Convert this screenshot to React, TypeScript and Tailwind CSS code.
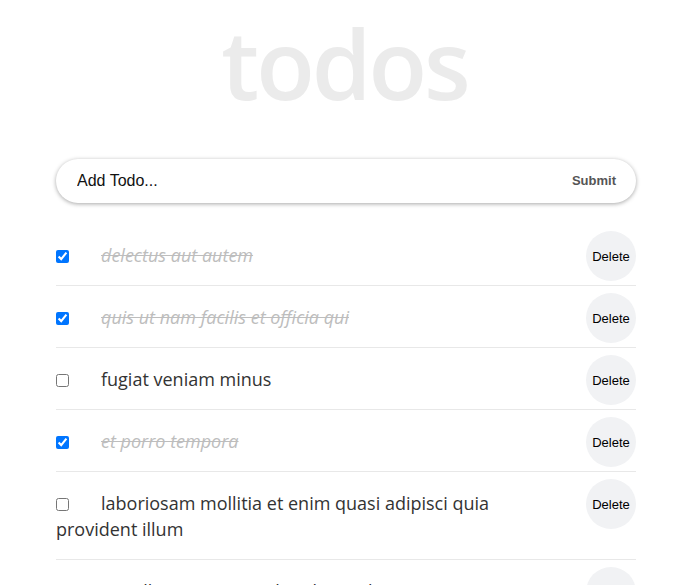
import { useState } from "react";

type Todo = { id: number; title: string; completed: boolean };

const initialTodos: Todo[] = [
    { id: 1, title: "delectus aut autem", completed: true },
    { id: 2, title: "quis ut nam facilis et officia qui", completed: true },
    { id: 3, title: "fugiat veniam minus", completed: false },
    { id: 4, title: "et porro tempora", completed: true },
    { id: 5, title: "laboriosam mollitia et enim quasi adipisci quia provident illum", completed: false },
    { id: 6, title: "qui ullam ratione quibusdam voluptatem quia omnis", completed: false },
    { id: 7, title: "illo expedita consequatur quia in", completed: false },
];

export default function App() {
    const [todos, setTodos] = useState<Todo[]>(initialTodos);
    const [text, setText] = useState("");

    const toggle = (id: number) => {
        setTodos(todos.map(t => (t.id === id ? { ...t, completed: !t.completed } : t)));
    };

    const remove = (id: number) => {
        setTodos(todos.filter(t => t.id !== id));
    };

    const submit = (e: React.FormEvent) => {
        e.preventDefault();
        if (!text.trim()) return;
        setTodos([...todos, { id: Date.now(), title: text, completed: false }]);
        setText("");
    };

    return (
        <div className="min-h-screen bg-white font-['Open_Sans',sans-serif]">
            <div className="w-[580px] ml-[56px]">
                {/* Title */}
                <h1 className="pr-[3px] text-center text-[96px] leading-[126px] tracking-[-3px] font-semibold text-[#ebebeb] select-none">
                    todos
                </h1>

                {/* Add form */}
                <form
                    onSubmit={submit}
                    className="mt-[33px] h-[44px] flex items-center rounded-full bg-white shadow-[0_1px_4px_rgba(0,0,0,0.35)]"
                >
                    <input
                        value={text}
                        onChange={e => setText(e.target.value)}
                        placeholder="Add Todo..."
                        className="flex-1 h-full pl-[21px] bg-transparent outline-none text-[16px] font-['Liberation_Sans',Arial,sans-serif] text-black placeholder:text-[#111]"
                    />
                    <button
                        type="submit"
                        className="pr-[20px] pl-3 h-full text-[13px] font-bold text-[#555] font-['Liberation_Sans',Arial,sans-serif]"
                    >
                        Submit
                    </button>
                </form>

                {/* List */}
                <ul className="mt-[21px]">
                    {todos.map(todo => (
                        <li
                            key={todo.id}
                            className="flex items-start justify-between pt-[7px] pb-[4px] border-b border-[#e8e8e8]"
                        >
                            <label className="flex-1 pt-[11px] pb-[13px] pr-[60px] text-[18px] leading-[26px] text-[#333]">
                                <input
                                    type="checkbox"
                                    checked={todo.completed}
                                    onChange={() => toggle(todo.id)}
                                    className="w-[13px] h-[13px] align-[-1px]"
                                />
                                <span
                                    className={
                                        todo.completed
                                            ? "ml-8 italic line-through text-[#bdbdbd]"
                                            : "ml-8"
                                    }
                                >
                                    {todo.title}
                                </span>
                            </label>
                            <button
                                onClick={() => remove(todo.id)}
                                className="w-[50px] h-[50px] shrink-0 pt-[2px] rounded-full bg-[#f1f2f4] text-[13px] text-black font-['Liberation_Sans',Arial,sans-serif]"
                            >
                                Delete
                            </button>
                        </li>
                    ))}
                </ul>
            </div>
        </div>
    );
}
